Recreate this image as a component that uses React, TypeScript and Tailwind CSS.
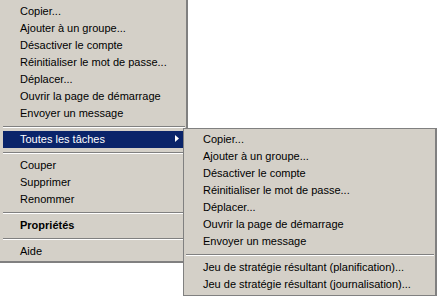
import React from "react";

type Item = { label: string; bold?: boolean; active?: boolean; sub?: boolean } | "sep";

const mainItems: Item[] = [
  { label: "Copier..." },
  { label: "Ajouter à un groupe..." },
  { label: "Désactiver le compte" },
  { label: "Réinitialiser le mot de passe..." },
  { label: "Déplacer..." },
  { label: "Ouvrir la page de démarrage" },
  { label: "Envoyer un message" },
  "sep",
  { label: "Toutes les tâches", active: true, sub: true },
  "sep",
  { label: "Couper" },
  { label: "Supprimer" },
  { label: "Renommer" },
  "sep",
  { label: "Propriétés", bold: true },
  "sep",
  { label: "Aide" },
];

const subItems: Item[] = [
  { label: "Copier..." },
  { label: "Ajouter à un groupe..." },
  { label: "Désactiver le compte" },
  { label: "Réinitialiser le mot de passe..." },
  { label: "Déplacer..." },
  { label: "Ouvrir la page de démarrage" },
  { label: "Envoyer un message" },
  "sep",
  { label: "Jeu de stratégie résultant (planification)..." },
  { label: "Jeu de stratégie résultant (journalisation)..." },
];

function Row({ item }: { item: Item }) {
  if (item === "sep") {
    return (
      <div className="h-[9px] pt-[4px] px-0">
        <div className="h-px bg-[#808080]" />
        <div className="h-px bg-white" />
      </div>
    );
  }
  return (
    <div
      className={
        "relative h-[17px] leading-[17px] pl-[17px] whitespace-nowrap " +
        (item.active ? "bg-[#0a246a] text-white" : "text-black") +
        (item.bold ? " font-bold" : "")
      }
    >
      {item.label}
      {item.sub && (
        <svg
          className="absolute left-[172px] top-[4px]"
          width="4"
          height="7"
          viewBox="0 0 4 7"
        >
          <path d="M0 0 L4 3.5 L0 7 Z" fill="white" />
        </svg>
      )}
    </div>
  );
}

export default function App() {
  return (
    <div
      className="relative w-[437px] h-[296px] bg-white overflow-hidden text-[11px]"
      style={{ fontFamily: '"Liberation Sans", Arial, sans-serif' }}
    >
      <div className="w-[188px] bg-[#d4d0c8] pl-[3px] pt-[3px] pr-[1px] pb-[1px] border-r-2 border-b-2 border-[#808080]">
        {mainItems.map((it, i) => (
          <Row key={i} item={it} />
        ))}
      </div>
      <div className="absolute left-[183px] top-[128px] w-[254px] bg-[#d4d0c8] border border-r-2 border-[#808080] pl-[2px] pt-[2px] pr-[1px] pb-[2px]">
        {subItems.map((it, i) => (
          <Row key={i} item={it} />
        ))}
      </div>
    </div>
  );
}
